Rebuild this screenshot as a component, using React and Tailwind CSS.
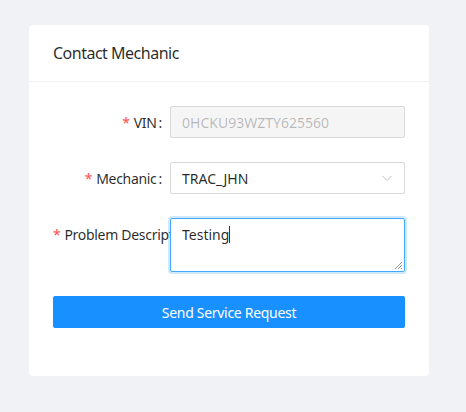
import React from "react";

export default function App() {
  const font = { fontFamily: '"Noto Sans", "Open Sans", sans-serif' };
  return (
    <div className="w-[466px] h-[412px] bg-[#f0f2f5] pt-[25px] pl-[29px]" style={font}>
      <div className="w-[400px] h-[351px] bg-white rounded-[4px] flex flex-col">
        <div className="h-[57px] border-b border-[#f0f0f0] px-6 flex items-center text-[16px] tracking-[-0.5px] text-[rgba(0,0,0,0.85)]">
          Contact Mechanic
        </div>
        <div className="px-6 pt-6 flex flex-col">
          <div className="flex items-center h-8 mb-6">
            <div className="w-[117px] shrink-0 flex justify-end items-center text-[14px] tracking-[-0.3px] text-[rgba(0,0,0,0.85)] whitespace-nowrap overflow-hidden">
              <span className="text-[#ff4d4f] mr-1">*</span>
              <span>VIN</span>
              <span className="ml-[2px] mr-2">:</span>
            </div>
            <div className="flex-1 h-8 border border-[#d9d9d9] bg-[#f5f5f5] rounded-[2px] px-[11px] flex items-center text-[14px] text-[rgba(0,0,0,0.25)]">
              0HCKU93WZTY625560
            </div>
          </div>
          <div className="flex items-center h-8 mb-6">
            <div className="w-[117px] shrink-0 flex justify-end items-center text-[14px] tracking-[-0.3px] text-[rgba(0,0,0,0.85)] whitespace-nowrap overflow-hidden">
              <span className="text-[#ff4d4f] mr-1">*</span>
              <span>Mechanic</span>
              <span className="ml-[2px] mr-2">:</span>
            </div>
            <div className="flex-1 h-8 border border-[#d9d9d9] bg-white rounded-[2px] px-[11px] flex items-center justify-between text-[14px] text-[rgba(0,0,0,0.85)]">
              <span>TRAC_JHN</span>
              <svg width="12" height="12" viewBox="0 0 12 12" fill="none">
                <path d="M1.5 4l4.5 4.5L10.5 4" stroke="#bfbfbf" strokeWidth="1" />
              </svg>
            </div>
          </div>
          <div className="flex items-start mb-6">
            <div className="w-[117px] h-8 shrink-0 flex items-center text-[14px] tracking-[-0.3px] text-[rgba(0,0,0,0.85)] whitespace-nowrap overflow-hidden">
              <span className="text-[#ff4d4f] mr-1">*</span>
              <span>Problem Description</span>
            </div>
            <div className="flex-1 relative h-[54px] border border-[#40a9ff] rounded-[2px] shadow-[0_0_0_2px_rgba(24,144,255,0.2)] px-[11px] pt-[5px] text-[14px] text-[rgba(0,0,0,0.85)]">
              <span>Testing</span>
              <span className="inline-block w-px h-[17px] bg-[#333] align-[-3px]"></span>
              <svg width="9" height="9" viewBox="0 0 9 9" className="absolute right-[1px] bottom-[1px]">
                <path d="M8 1L1 8M8 4L4 8M8 7L7 8" stroke="#8c8c8c" strokeWidth="0.9" />
              </svg>
            </div>
          </div>
          <button className="h-8 w-full bg-[#1890ff] text-white text-[14px] tracking-[-0.3px] rounded-[2px]" style={font}>
            Send Service Request
          </button>
        </div>
      </div>
    </div>
  );
}
